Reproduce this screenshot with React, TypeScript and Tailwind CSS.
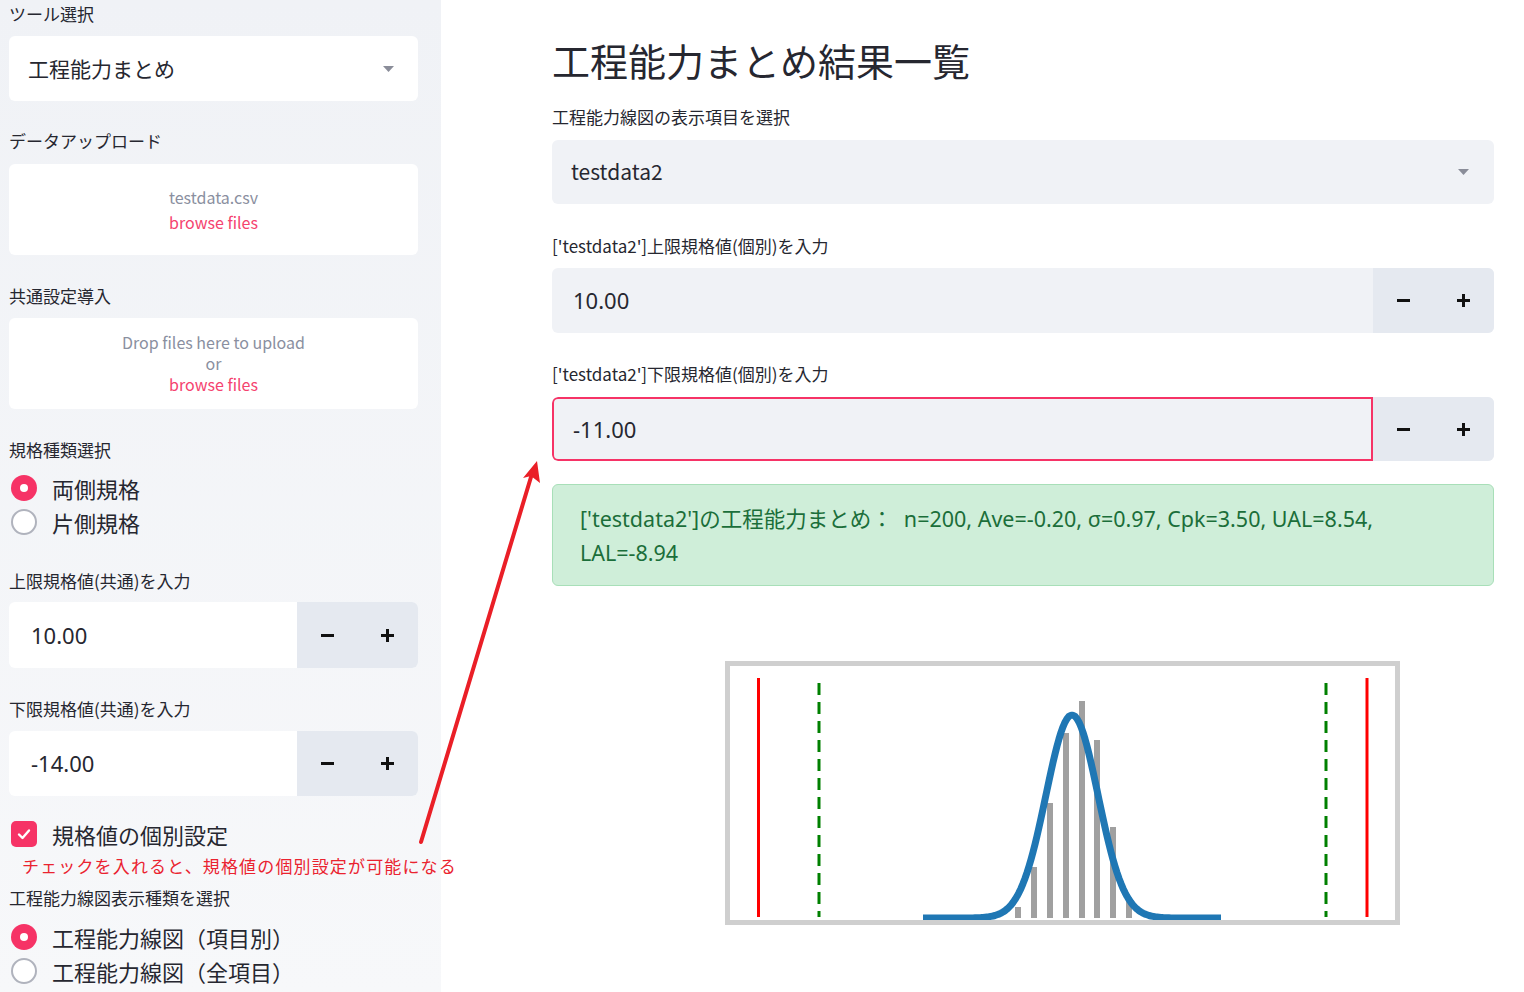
import React from 'react';

const FONT = { fontFamily: '"Noto Sans CJK JP", "Noto Sans", sans-serif' };
const LATIN = { fontFamily: '"Noto Sans", "Noto Sans CJK JP", sans-serif' };

function Caret({ className = '' }: { className?: string }) {
    return (
        <svg width="11" height="6" viewBox="0 0 11 6" className={className}>
            <path d="M0 0 H11 L5.5 6 Z" fill="#8a8d99" />
        </svg>
    );
}

function Stepper() {
    return (
        <div className="flex w-[121px] shrink-0 items-center bg-[#e5e9f0]">
            <div className="flex w-[60px] justify-center">
                <svg width="13" height="13" viewBox="0 0 13 13">
                    <rect x="0" y="5" width="13" height="3" fill="#111" />
                </svg>
            </div>
            <div className="flex w-[60px] justify-center">
                <svg width="13" height="13" viewBox="0 0 13 13">
                    <rect x="0" y="5" width="13" height="3" fill="#111" />
                    <rect x="5" y="0" width="3" height="13" fill="#111" />
                </svg>
            </div>
        </div>
    );
}

function Radio({ checked, label }: { checked?: boolean; label: string }) {
    return (
        <div className="flex h-[34px] items-center">
            {checked ? (
                <div className="ml-[2px] flex h-[26px] w-[26px] items-center justify-center rounded-full bg-[#f63366]">
                    <div className="h-[8px] w-[8px] rounded-full bg-white" />
                </div>
            ) : (
                <div className="ml-[2px] h-[26px] w-[26px] rounded-full border-2 border-[#b0b3bd] bg-white" />
            )}
            <span className="ml-[15px] text-[22px] text-[#262730]">{label}</span>
        </div>
    );
}

function Label({ text, className = '' }: { text: string; className?: string }) {
    return <div className={`h-[24px] text-[17px] leading-[24px] text-[#262730] ${className}`}>{text}</div>;
}

function ProcessChart() {
    // bell curve points
    const pts: string[] = [];
    for (let x = 200; x <= 498; x += 2) {
        const z = (x - 349) / 26;
        const y = 259 - 203 * Math.exp(-0.5 * z * z);
        pts.push(`${x},${y.toFixed(1)}`);
    }
    const bars = [
        [295, 248],
        [311, 208],
        [327, 144],
        [343, 74],
        [359, 42],
        [374, 81],
        [390, 168],
        [406, 241],
    ];
    return (
        <svg width="680" height="270" viewBox="0 0 680 270" className="ml-[171px] mt-[73px] block">
            <rect x="0" y="0" width="680" height="270" fill="white" />
            {bars.map(([x, top]) => (
                <rect key={x} x={x - 3} y={top} width="6" height={259 - top} fill="#a0a0a0" />
            ))}
            <polyline points={pts.join(' ')} fill="none" stroke="#1f77b4" strokeWidth="7" strokeLinejoin="round" />
            <line x1="35.5" y1="19" x2="35.5" y2="258" stroke="#ff0000" strokeWidth="3" />
            <line x1="644" y1="19" x2="644" y2="258" stroke="#ff0000" strokeWidth="3" />
            <line x1="96" y1="24" x2="96" y2="258" stroke="#008000" strokeWidth="3" strokeDasharray="12 7" />
            <line x1="603" y1="24" x2="603" y2="258" stroke="#008000" strokeWidth="3" strokeDasharray="12 7" />
            <rect x="4.5" y="4.5" width="670" height="259" fill="none" stroke="#cfcfcf" strokeWidth="5" />
        </svg>
    );
}

export default function App() {
    return (
        <div className="relative flex h-[992px] w-[1524px] overflow-hidden bg-white" style={FONT}>
            {/* sidebar */}
            <aside className="w-[441px] shrink-0 bg-linear-to-b from-[#f0f2f6] to-[#f7f8fa] pl-[9px] pr-[23px] pt-[2px]">
                <Label text="ツール選択" />
                <div className="mt-[10px] flex h-[65px] items-center justify-between rounded-md bg-white pl-[19px] pr-[24px]">
                    <span className="text-[21px] text-[#262730]">工程能力まとめ</span>
                    <Caret />
                </div>

                <Label text="データアップロード" className="mt-[28px]" />
                <div className="mt-[11px] flex h-[91px] flex-col items-center justify-center rounded-md bg-white text-[16px] leading-[25px]">
                    <span className="text-[#8a8fa0]">testdata.csv</span>
                    <span className="text-[#f5436f]">browse files</span>
                </div>

                <Label text="共通設定導入" className="mt-[29px]" />
                <div className="mt-[10px] flex h-[91px] flex-col items-center justify-center rounded-md bg-white text-[16px] leading-[21px]">
                    <span className="text-[#8a8fa0]">Drop files here to upload</span>
                    <span className="text-[#8a8fa0]">or</span>
                    <span className="text-[#f5436f]">browse files</span>
                </div>

                <Label text="規格種類選択" className="mt-[29px]" />
                <div className="mt-[9px]">
                    <Radio checked label="両側規格" />
                    <Radio label="片側規格" />
                </div>

                <Label text="上限規格値(共通)を入力" className="mt-[30px]" />
                <div className="mt-[9px] flex h-[66px] overflow-hidden rounded-md bg-white">
                    <div className="flex flex-1 items-center pl-[22px] text-[22px] text-[#262730]" style={LATIN}>10.00</div>
                    <Stepper />
                </div>

                <Label text="下限規格値(共通)を入力" className="mt-[29px]" />
                <div className="mt-[10px] flex h-[65px] overflow-hidden rounded-md bg-white">
                    <div className="flex flex-1 items-center pl-[22px] text-[22px] text-[#262730]" style={LATIN}>-14.00</div>
                    <Stepper />
                </div>

                <div className="mt-[21px] flex h-[34px] items-center">
                    <div className="ml-[2px] flex h-[26px] w-[26px] items-center justify-center rounded-[5px] bg-[#f63366]">
                        <svg width="16" height="16" viewBox="0 0 16 16">
                            <path d="M3 8.5 L6.5 12 L13 4.5" fill="none" stroke="white" strokeWidth="2.4" strokeLinecap="round" strokeLinejoin="round" />
                        </svg>
                    </div>
                    <span className="ml-[15px] text-[22px] text-[#262730]">規格値の個別設定</span>
                </div>
                <div className="mt-[3px] whitespace-nowrap pl-[13px] text-[17px] leading-[24px] tracking-[1.15px] text-[#ea2330]">
                    チェックを入れると、規格値の個別設定が可能になる
                </div>
                <Label text="工程能力線図表示種類を選択" className="mt-[8px]" />
                <div className="mt-[10px]">
                    <Radio checked label="工程能力線図（項目別）" />
                    <Radio label="工程能力線図（全項目）" />
                </div>
            </aside>

            {/* main */}
            <main className="flex-1 pl-[111px] pr-[30px] pt-[34px]">
                <h1 className="h-[52px] text-[38px] leading-[52px] text-[#262730]">工程能力まとめ結果一覧</h1>

                <Label text="工程能力線図の表示項目を選択" className="mt-[19px]" />
                <div className="mt-[11px] flex h-[64px] items-center justify-between rounded-md bg-[#f0f2f6] pl-[19px] pr-[25px]">
                    <span className="text-[21px] text-[#262730]">testdata2</span>
                    <Caret />
                </div>

                <Label text="['testdata2']上限規格値(個別)を入力" className="mt-[30px]" />
                <div className="mt-[10px] flex h-[65px] overflow-hidden rounded-md bg-[#f0f2f6]">
                    <div className="flex flex-1 items-center pl-[21px] text-[22px] text-[#262730]" style={LATIN}>10.00</div>
                    <Stepper />
                </div>

                <Label text="['testdata2']下限規格値(個別)を入力" className="mt-[29px]" />
                <div className="mt-[11px] flex h-[64px] overflow-hidden rounded-md bg-[#f0f2f6]">
                    <div
                        className="flex flex-1 items-center rounded-l-md border-2 border-[#f63366] pl-[19px] text-[22px] text-[#262730]"
                        style={LATIN}
                    >
                        -11.00
                    </div>
                    <Stepper />
                </div>

                <div
                    className="mt-[23px] h-[102px] rounded-md border border-[#a8dfb8] bg-[#cfeed9] pl-[27px] pt-[17px] text-[21.5px] leading-[34px] text-[#1b6e3a]"
                    style={LATIN}
                >
                    ['testdata2']の工程能力まとめ：&nbsp;&nbsp;n=200, Ave=-0.20, σ=0.97, Cpk=3.50, UAL=8.54,
                    <br />
                    LAL=-8.94
                </div>

                <ProcessChart />
            </main>

            {/* annotation arrow */}
            <svg className="pointer-events-none absolute left-0 top-0" width="1524" height="992">
                <line x1="421" y1="842" x2="531" y2="477" stroke="#ea1f27" strokeWidth="4" strokeLinecap="round" />
                <polygon points="537,461 540,483 531,476 523,478" fill="#ea1f27" />
            </svg>
        </div>
    );
}
